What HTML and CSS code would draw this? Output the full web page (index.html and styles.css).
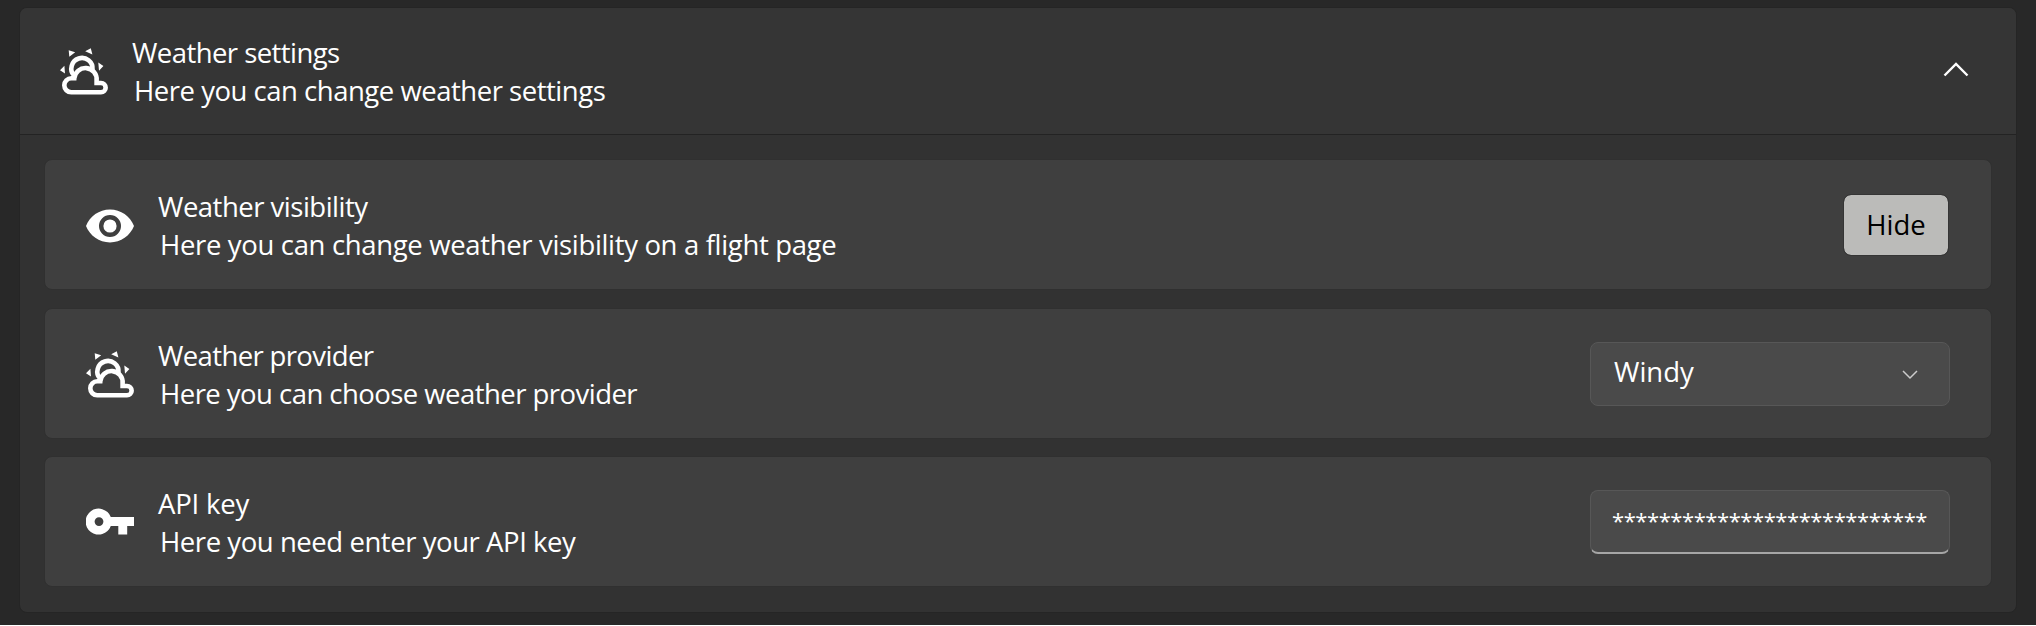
FILE: index.html
```
<!DOCTYPE html>
<html lang="en">
<head>
<meta charset="utf-8">
<title>Weather settings</title>
<link rel="stylesheet" href="styles.css">
</head>
<body>
<svg class="defs" width="0" height="0">
  <symbol id="weather" viewBox="0 0 48 48">
    <g fill="none" stroke="currentColor" stroke-width="4.6" stroke-linejoin="miter">
      <path d="M14.3 30.3H11.3A7 7 0 0 0 11.3 44.3H41A4.65 4.65 0 0 0 41 35H36.6V32.2A11.15 11.15 0 0 0 14.3 30.3Z"/>
      <path d="M14 27.6A10.6 10.6 0 1 1 32.5 21.6"/>
    </g>
    <path fill="currentColor" d="M8.7 2.3L15.2 4.3L9.3 8.8ZM25.2 3.2L30.8 .3L32.4 6.4ZM38.3 14.6L43.4 18L39 22.8ZM0 22.3L4.4 17.8L5 25.4Z"/>
  </symbol>
</svg>
<main class="panel">
  <header class="head">
    <svg class="icon"><use href="#weather"/></svg>
    <div class="text">
      <h1 class="title t1">Weather settings</h1>
      <p class="desc d1">Here you can change weather settings</p>
    </div>
    <svg class="up" viewBox="0 0 26 16"><path d="M1.5 13.5L13 2L24.5 13.5"/></svg>
  </header>
  <div class="list">
    <section class="row">
      <svg class="icon eye" viewBox="0 0 48 48"><path fill="currentColor" fill-rule="evenodd" d="M24 7.6C13.1 7.6 3.8 14.4 0 24C3.8 33.6 13.1 40.4 24 40.4S44.2 33.6 48 24C44.2 14.4 34.9 7.6 24 7.6ZM24 13A11 11 0 1 1 24 35A11 11 0 0 1 24 13ZM24 17.4A6.6 6.6 0 1 0 24 30.6A6.6 6.6 0 0 0 24 17.4Z"/></svg>
      <div class="text">
        <h2 class="title t2">Weather visibility</h2>
        <p class="desc d2">Here you can change weather visibility on a flight page</p>
      </div>
      <button class="button">Hide</button>
    </section>
    <section class="row">
      <svg class="icon sun"><use href="#weather"/></svg>
      <div class="text">
        <h2 class="title t3">Weather provider</h2>
        <p class="desc d3">Here you can choose weather provider</p>
      </div>
      <div class="field">
        <span class="value">Windy</span>
        <svg class="down" viewBox="0 0 16 10"><path d="M1 1L8 8L15 1"/></svg>
      </div>
    </section>
    <section class="row">
      <svg class="icon key" viewBox="0 0 48 48"><path fill="currentColor" fill-rule="evenodd" d="M24.8 17.1A13 13 0 1 0 24.8 26.1H32.3V34.6H41.2V26.1H48V17.1ZM13 17.2A4.4 4.4 0 1 1 13 26A4.4 4.4 0 0 1 13 17.2Z"/></svg>
      <div class="text">
        <h2 class="title t4">API key</h2>
        <p class="desc d4">Here you need enter your API key</p>
      </div>
      <div class="field input"><span class="stars">***************************</span></div>
    </section>
  </div>
</main>
</body>
</html>
```
FILE: styles.css
```
* { box-sizing: border-box; }
body {
  margin: 0;
  height: 626px;
  padding: 7px 19px 0 19px;
  overflow: hidden;
  background: #282828;
  border-bottom: 1px solid #fff;
  color: #fff;
  font: 27.5px/38px "Open Sans", "Noto Sans", sans-serif;
  white-space: nowrap;
}
.defs { display: block; height: 0; }
.panel {
  height: 606px;
  background: #323232;
  border: 1px solid #252525;
  border-radius: 8px;
}
.head {
  display: flex;
  height: 127px;
  padding: 0 47px 0 40px;
  background: #353535;
  border-bottom: 1px solid #232323;
  border-radius: 7px 7px 0 0;
}
.icon { width: 48px; height: 48px; flex: none; margin-top: 40px; }
.eye { margin-top: 41.5px; }
.sun { margin-top: 42px; }
.key { margin-top: 43.4px; }
.text { flex: 1; padding-top: 26px; margin-left: 24px; }
.row .text { padding-top: 28px; }
.title, .desc { margin: 0; font-size: inherit; font-weight: 400; height: 38px; }
.desc { padding-left: 2px; }
.t1 { letter-spacing: -.56px; }
.t2 { letter-spacing: -.5px; }
.t3 { letter-spacing: -.63px; }
.t4 { letter-spacing: -.2px; }
.d1 { letter-spacing: -.48px; }
.d2 { letter-spacing: -.34px; }
.d3 { letter-spacing: -.54px; }
.d4 { letter-spacing: -.44px; }
.up { width: 26px; height: 16px; margin-top: 54px; }
.up path { fill: none; stroke: #fff; stroke-width: 2.4; }
.list {
  display: grid;
  gap: 17.5px;
  grid-template-rows: 131px 131px 131px;
  padding: 24px;
}
.row {
  display: flex;
  padding: 0 42px 0 41px;
  background: #3f3f3f;
  border: 1px solid #303030;
  border-radius: 8px;
}
.button {
  width: 106px;
  height: 62px;
  margin-top: 34px;
  padding: 0;
  background: #bbbbb9;
  background-clip: padding-box;
  border: 1px solid #353535;
  border-radius: 8px;
  color: #000;
  font: inherit;
}
.field {
  display: flex;
  justify-content: space-between;
  width: 360px;
  height: 64px;
  margin: 33px -1px 0 0;
  padding: 10px 31px 0 23px;
  background: #4a4a4a;
  border: 1px solid #575757;
  border-radius: 8px;
}
.down { width: 16px; height: 10px; margin-top: 17px; }
.down path { fill: none; stroke: #ccc; stroke-width: 1.5; }
.input { border-bottom: 2px solid #a6a6a6; padding-left: 21px; }
.stars { font-size: 22px; letter-spacing: -.45px; }
```
